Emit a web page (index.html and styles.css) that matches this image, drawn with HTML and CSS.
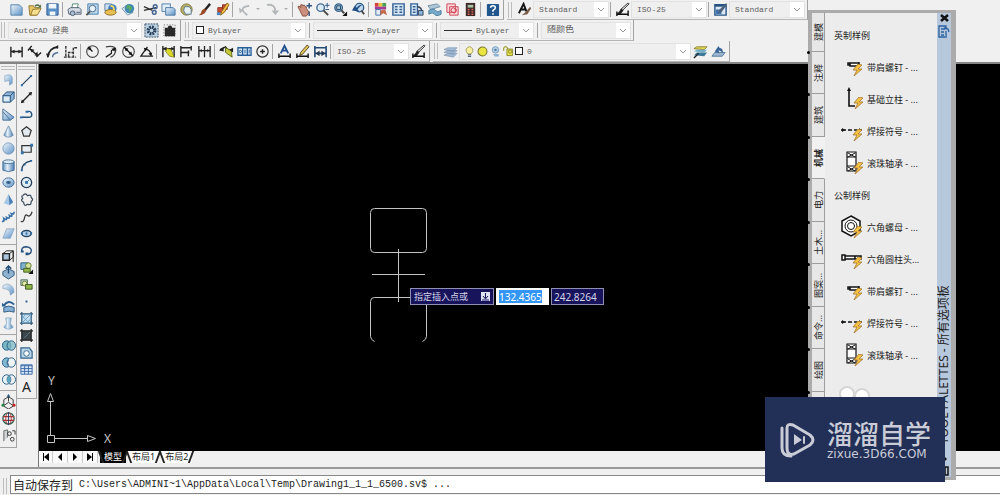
FILE: index.html
```html
<!DOCTYPE html>
<html lang="zh-CN">
<head>
<meta charset="utf-8">
<title>AutoCAD 经典</title>
<link rel="stylesheet" href="styles.css">
</head>
<body>
<svg class="defs" aria-hidden="true">
<defs>
<linearGradient id="g" x1="0" y1="0" x2="1" y2="1"><stop offset="0" stop-color="#eef6fc"/><stop offset="1" stop-color="#5f93c6"/></linearGradient>
<linearGradient id="gh"><stop offset="0" stop-color="#5d8fc0"/><stop offset=".4" stop-color="#e4f0fa"/><stop offset="1" stop-color="#4a7cb0"/></linearGradient>
<symbol id="new" viewBox="0 0 16 16"><path d="M2 3h9l3 3v8H2z" fill="url(#g)" stroke="#5480a8"/></symbol>
<symbol id="open" viewBox="0 0 16 16"><path d="M2 4h5l1 2h4l-2 8H3z" fill="#e9c867" stroke="#94752d"/><path d="M6 8l9-1-4 7H4z" fill="#f7df91" stroke="#94752d"/><path d="M8 4q3-3 6 0l1-2v4h-4l2-1q-2-2-4 0" fill="#4c6a3c"/></symbol>
<symbol id="save" viewBox="0 0 16 16"><path d="M2 2h12v12H2z" fill="#5a8fc8" stroke="#345f92"/><path d="M4 2h8v5H4zM5 10h6v4H5z" fill="#eef5fb"/></symbol>
<symbol id="print" viewBox="0 0 16 16"><path d="M5 7l1-5h6l-1 5" fill="#fff" stroke="#587"/><path d="M1 8l3-2h9l2 2v5H2z" fill="#d4dbe4" stroke="#526276"/><circle cx="6" cy="12" r="2.500" fill="#aebcd0" stroke="#4b5b70"/><path d="M10 11h4" stroke="#4b5b70"/></symbol>
<symbol id="preview" viewBox="0 0 16 16"><path d="M3 2h11v11H3z" fill="#b7d6ee" stroke="#4f82ae"/><circle cx="8" cy="7" r="3.500" fill="#e5f2fb" stroke="#4f6a85"/><path d="M5.500 10L1.500 14" stroke="#555" stroke-width="2"/></symbol>
<symbol id="publish" viewBox="0 0 16 16"><path d="M2 2h7v7H2z" fill="#cfe2f4" stroke="#5a7fa8"/><circle cx="10" cy="7" r="4.500" fill="#3d7dc0"/><ellipse cx="8" cy="11" rx="6" ry="3" fill="#e8c050" stroke="#8c6a20"/><path d="M8 4l3 1 1 4" stroke="#e8d36c" fill="none" stroke-width="2"/></symbol>
<symbol id="globe" viewBox="0 0 16 16"><path d="M1 7l6-4 6 8-6 3z" fill="#d9e6ee" stroke="#7b95aa"/><circle cx="9" cy="7" r="5" fill="#3f88b4"/><path d="M7 3q4 0 5 4l-3 4-1-4-3 0z" fill="#59a867"/></symbol>
<symbol id="cut" viewBox="0 0 16 16"><path d="M1 5l9 4M1 9l13-3" stroke="#333" stroke-width="1.500"/><circle cx="12" cy="11" r="2" fill="none" stroke="#3f5e90" stroke-width="1.500"/><circle cx="13" cy="5" r="2" fill="none" stroke="#3f5e90" stroke-width="1.500"/></symbol>
<symbol id="copy" viewBox="0 0 16 16"><path d="M1 2h9v8H1z" fill="#e1eef8" stroke="#5480a8"/><path d="M5 6h8l2 2v6H5z" fill="url(#g)" stroke="#4876a2"/></symbol>
<symbol id="paste" viewBox="0 0 16 16"><circle cx="8" cy="8" r="6" fill="#b9ae65" stroke="#7c7436"/><path d="M6 5h5l2 3v5H7L5 9z" fill="#e6f0f6" stroke="#5b7c90"/></symbol>
<symbol id="brush" viewBox="0 0 16 16"><path d="M14 2L8 9" stroke="#222" stroke-width="2.500"/><path d="M8 7l2 2q-2 5-8 5 3-2 3-5z" fill="#9b4d28"/></symbol>
<symbol id="bedit" viewBox="0 0 16 16"><path d="M3 6h5v5H3zM8 3h5v5H8z" fill="#cf4e35" stroke="#8b2e1e"/><path d="M2 11h4v3H2z" fill="#4b88c4"/><path d="M13 1L7 10l-1 4 4-3 5-8z" fill="#efb943" stroke="#8d6420"/></symbol>
<symbol id="undo" viewBox="0 0 16 16"><path d="M11 14Q0 6 13 4" fill="none" stroke="#b5b8bb" stroke-width="2"/><path d="M2 6l1 6 4-3z" fill="#b5b8bb"/></symbol>
<symbol id="redo" viewBox="0 0 16 16"><path d="M2 3q9-1 9 7" fill="none" stroke="#b5b8bb" stroke-width="2"/><path d="M7 9h8l-4 5z" fill="#b5b8bb"/></symbol>
<symbol id="pan" viewBox="0 0 16 16"><path d="M1 5q1-2 3 1V3q2-1 2 1 2-2 3 1 2 0 1 2l3 4-3 4H6z" fill="#cc8f7d" stroke="#84503f"/><path d="M13 1v6M10 4h6M13 10v5" stroke="#2f537d" stroke-width="1.500"/></symbol>
<symbol id="zoom" viewBox="0 0 16 16"><circle cx="6" cy="6" r="4" fill="#dcecf7" stroke="#496f96" stroke-width="1.500"/><path d="M9 9l5 5" stroke="#444" stroke-width="2"/><path d="M13 1v5M10.500 3.500h5M11 8h4" stroke="#275788"/></symbol>
<symbol id="zoomw" viewBox="0 0 16 16"><circle cx="6" cy="6" r="4" fill="#a7cbe7" stroke="#3a638e" stroke-width="1.500"/><path d="M4 4h4v4H4z" fill="none" stroke="#245"/><path d="M9 9l3 3" stroke="#444" stroke-width="2"/><path d="M15 10v5h-5z" fill="#111"/></symbol>
<symbol id="zoomp" viewBox="0 0 16 16"><circle cx="9" cy="6" r="4.500" fill="#c3dcf0" stroke="#365f8b" stroke-width="1.500"/><path d="M11 9l3 4" stroke="#444" stroke-width="2"/><path d="M1 9l3-5 2 2q3-4 6-3-4 3-5 5l2 2z" fill="#234e83"/></symbol>
<symbol id="prop" viewBox="0 0 16 16"><path d="M2 1h4v4H2z" fill="#d2413c"/><path d="M6 1h4v4H6z" fill="#e6c53b"/><path d="M10 1h4v4h-4z" fill="#4c9f54"/><path d="M2 5h12v3H2z" fill="#a33c9b"/><path d="M3 8h5v6H3z" fill="#e4edf6" stroke="#4672a6"/><path d="M8 9l5-1 2 6-4-2-3 2z" fill="#c76b4c"/></symbol>
<symbol id="dc" viewBox="0 0 16 16"><path d="M2 2h12v12H2z" fill="#dcebf7" stroke="#315f92" stroke-width="1.500"/><path d="M4 5h3M9 5h3M4 8h3M9 8h3M4 11h3M9 11h3" stroke="#315f92" stroke-width="1.500"/></symbol>
<symbol id="tp" viewBox="0 0 16 16"><path d="M2 2h7v12H2z" fill="#dcebf7" stroke="#315f92" stroke-width="1.500"/><path d="M4 5h3M4 8h3M4 11h3" stroke="#315f92" stroke-width="1.500"/><path d="M9 5q5 0 5 8" fill="none" stroke="#345" stroke-width="1.500"/><path d="M10 9h5v5h-5z" fill="#87b3dc" stroke="#345"/></symbol>
<symbol id="sheet" viewBox="0 0 16 16"><path d="M1 4l10-2 3 3-10 3z" fill="#b0c7d8" stroke="#7190a8"/><path d="M2 9q5-3 7 0t6 0v4q-5 3-7 0t-6 0z" fill="#76abc9" stroke="#467c9d"/></symbol>
<symbol id="markup" viewBox="0 0 16 16"><path d="M2 2h9v9H2zM5 5h9v9H5z" fill="#f9d7da" stroke="#cf4458"/><path d="M7 7q2-2 3 0 3 0 2 3-2 3-4 1-3-1-1-4" fill="none" stroke="#cf3147"/></symbol>
<symbol id="calc" viewBox="0 0 16 16"><path d="M3 1h10v14H3z" fill="#3c2928"/><path d="M5 3h6v3H5z" fill="#a9c3a7"/><path d="M5 8h2M9 8h2M5 10.500h2M9 10.500h2M5 13h2M9 13h2" stroke="#d76757" stroke-width="1.500"/></symbol>
<symbol id="help" viewBox="0 0 16 16"><rect x="2" y="2" width="13" height="13" rx="1" fill="#22568f"/><path d="M6 6q0-2 2.500-2T11 6q0 1.500-2.500 3v1.500M8.500 12v1.500" fill="none" stroke="#fff" stroke-width="1.700"/></symbol>
<symbol id="gear" viewBox="0 0 16 16"><path d="M1 1h14v14H1z" fill="#bdd2e3" stroke="#334c63" stroke-dasharray="2 1"/><circle cx="8" cy="8" r="4" fill="none" stroke="#263f59" stroke-width="2.500" stroke-dasharray="2 1.140"/><circle cx="8" cy="8" r="2.500" fill="none" stroke="#263f59"/></symbol>
<symbol id="ws" viewBox="0 0 16 16"><path d="M2 2h12v12H2z" fill="none" stroke="#555" stroke-dasharray="1 2"/><path d="M3 5h3l1-2h3l1 2h3v9H3z" fill="#292929"/></symbol>
<symbol id="linear" viewBox="0 0 16 16"><path d="M2 3v11M14 3v11M2 8h12" stroke="#222" stroke-width="1.500"/><path d="M2 8l4-2v4zM14 8l-4-2v4z" fill="#222"/></symbol>
<symbol id="aligned" viewBox="0 0 16 16"><path d="M3 5l9 8M5 2L1 7M15 9l-5 5" stroke="#222" stroke-width="1.500"/><path d="M3 5l5 1-3 3zM12 13l-1-5-3 4z" fill="#222"/></symbol>
<symbol id="arclen" viewBox="0 0 16 16"><path d="M3 14Q4 4 14 3" fill="none" stroke="#222" stroke-width="1.800"/><path d="M8 14q0-4 6-5" fill="none" stroke="#4d6e90" stroke-width="1.500"/><path d="M14 1v4l-4-1zM1 10l4 1-2 4z" fill="#222"/></symbol>
<symbol id="ordinate" viewBox="0 0 16 16"><path d="M3 2v12M1 14h13M6 14V9h5V4h4M11 8v6" fill="none" stroke="#333" stroke-dasharray="3 1" stroke-width="1.500"/></symbol>
<symbol id="radius" viewBox="0 0 16 16"><circle cx="8" cy="8" r="6.200" fill="none" stroke="#444" stroke-width="1.200"/><path d="M8 8L4 4" stroke="#111" stroke-width="1.400"/><path d="M3 3l4 1-3 3z" fill="#111"/></symbol>
<symbol id="jog" viewBox="0 0 16 16"><path d="M3 3q13-2 10 6-1 4-5 5" fill="none" stroke="#444" stroke-width="1.400"/><path d="M13 5L9 7v3l-6 4" fill="none" stroke="#222" stroke-width="1.300"/><path d="M14 4l-5 1 3 3z" fill="#111"/></symbol>
<symbol id="diam" viewBox="0 0 16 16"><circle cx="8" cy="8" r="6.200" fill="none" stroke="#444" stroke-width="1.200"/><path d="M3 3l10 10" stroke="#111" stroke-width="1.400"/><path d="M4 4l4 1-3 3zM12 12l-4-1 3-3z" fill="#111"/></symbol>
<symbol id="angle" viewBox="0 0 16 16"><path d="M9 3L2 13h13M6 5q6 1 7 7" fill="none" stroke="#222" stroke-width="1.400"/><path d="M5 4l4 1-2 3zM13 13l-3-3 4-1z" fill="#111"/></symbol>
<symbol id="quick" viewBox="0 0 16 16"><path d="M2 2v12M14 2v12M2 5h12" stroke="#222" stroke-width="1.500"/><path d="M4 4l7 2 3 8-5-1-4-5z" fill="#dbd928" stroke="#77741f" stroke-width=".7"/><path d="M2 5l4-2v4zM14 5l-3-2v4z" fill="#222"/></symbol>
<symbol id="base" viewBox="0 0 16 16"><path d="M2 2v12M13 2v5M10 7v6M2 4h11M2 9h9" fill="none" stroke="#222" stroke-width="1.500"/></symbol>
<symbol id="cont" viewBox="0 0 16 16"><path d="M2 2v12M8 2v12M14 2v12M2 7h12" stroke="#222" stroke-width="1.400"/><path d="M3 7l2-2v4zM13 7l-2-2v4z" fill="#222"/></symbol>
<symbol id="space" viewBox="0 0 16 16"><path d="M1 6l6-3 2 3 5 1" fill="none" stroke="#222" stroke-width="1.500"/><path d="M7 4l6 3 1 7-7-5z" fill="#c8cb35" stroke="#5c6a23"/><path d="M0 7l5-4v5zM15 4v5l-4-3z" fill="#222"/></symbol>
<symbol id="tol" viewBox="0 0 16 16"><path d="M1 4h14v8H1zM6 4v8M11 4v8" fill="#d8e9f8" stroke="#285f9a" stroke-width="1.400"/><circle cx="3.500" cy="8" r="1.200" fill="none" stroke="#285f9a"/><path d="M8.500 6v4M13 6v4" stroke="#285f9a"/></symbol>
<symbol id="center" viewBox="0 0 16 16"><circle cx="8" cy="8" r="6" fill="none" stroke="#333" stroke-width="1.300"/><path d="M8 5.500v5M5.500 8h5" stroke="#222" stroke-width="1.500"/></symbol>
<symbol id="dima" viewBox="0 0 16 16"><path d="M4 10l4-8 4 8M5.500 7h5" fill="none" stroke="#214f8f" stroke-width="2"/><path d="M2 10v5M14 10v5M2 13h12" stroke="#111" stroke-width="1.500"/></symbol>
<symbol id="dime" viewBox="0 0 16 16"><path d="M13 1l2 2-7 8-3 1 1-3z" fill="#e4c55a" stroke="#514321"/><path d="M2 10v5M14 10v5M2 13h12" stroke="#111" stroke-width="1.500"/></symbol>
<symbol id="dimu" viewBox="0 0 16 16"><path d="M2 2v12M14 2v12M2 4h12M2 10h12" stroke="#244c77" stroke-width="1.700"/><path d="M3 10l4-3v6zM13 10l-4-3v6z" fill="#24364b"/></symbol>
<symbol id="dims" viewBox="0 0 16 16"><path d="M14 1l1 1-7 7-2-1z" fill="#ddd" stroke="#333"/><path d="M7 7l2 2-3 4H2z" fill="#222"/><path d="M2 10v5M14 9v6M2 13h12" stroke="#111" stroke-width="1.500"/></symbol>
<symbol id="txts" viewBox="0 0 16 16"><path d="M2 12L7 2l3 8M4 8h5" fill="none" stroke="#111" stroke-width="2"/><path d="M14 5l-5 6-4 3 6-1 4-6z" fill="#765944"/></symbol>
<symbol id="tabs" viewBox="0 0 16 16"><path d="M2 3h12v11H2z" fill="#dceaf6" stroke="#265384" stroke-width="1.500"/><path d="M2 4h12" stroke="#265384" stroke-width="2"/><path d="M3 8h6v5H3z" fill="#3f74ad"/><path d="M14 1L7 8l-2 4 4-1 6-8z" fill="#4f647d"/></symbol>
<symbol id="layers" viewBox="0 0 16 16"><path d="M1 12l4-2h10l-4 4zM1 9l4-2h10l-4 4zM1 6l4-2h10l-4 4z" fill="#a3bad4" stroke="#7f97b3" stroke-width=".7"/></symbol>
<symbol id="bulb" viewBox="0 0 16 16"><path d="M6 11Q3 8 4 5q4-6 8 0 1 3-2 6z" fill="#f9f0a0" stroke="#95904c"/><path d="M6 12h4M6 14h4" stroke="#546a7e" stroke-width="1.500"/></symbol>
<symbol id="sun" viewBox="0 0 16 16"><circle cx="8" cy="8" r="5.500" fill="#e9e43f" stroke="#77782e" stroke-width="1.300"/></symbol>
<symbol id="freeze" viewBox="0 0 16 16"><circle cx="8" cy="6" r="4" fill="#b4cee5" stroke="#7397b8"/><circle cx="8" cy="6" r="1.500" fill="#587fa7"/><path d="M5 11h7v3H7z" fill="#8bb3d1"/></symbol>
<symbol id="lock" viewBox="0 0 16 16"><path d="M2 7V4q2-4 5 0v4" fill="none" stroke="#a5a336" stroke-width="1.500"/><path d="M6 5h7v8H6z" fill="#e5e04b" stroke="#818026"/><circle cx="10" cy="8" r="2" fill="none" stroke="#818026"/></symbol>
<symbol id="lmatch" viewBox="0 0 16 16"><path d="M1 5l3-2h11l-3 3z" fill="#e8dc54" stroke="#888239"/><path d="M1 8l3-2h11l-3 3z" fill="#74b0ca"/><path d="M1 12l3-3h11l-3 4z" fill="#3f7a9a"/><path d="M1 15l5-5" stroke="#222" stroke-width="1.500"/></symbol>
<symbol id="lprev" viewBox="0 0 16 16"><path d="M1 13l3-4h11l-3 4z" fill="#9eb8d2" stroke="#53779a"/><path d="M4 8l4-6 1 2q5 1 3 6-1-3-4-3l1 3z" fill="#386598"/></symbol>
<symbol id="poly" viewBox="0 0 16 16"><path d="M4 3q7-3 8 2v6l-3 2V8L4 9z" fill="url(#g)" stroke="#7798ba" stroke-width=".6"/></symbol>
<symbol id="box" viewBox="0 0 16 16"><path d="M2 6l4-4h8v7l-4 4H2z" fill="#8db3d6" stroke="#2f567c"/><path d="M2 6h8v7M10 6l4-4" fill="none" stroke="#2f567c"/><path d="M3 7h6v5H3z" fill="#dceaf6"/></symbol>
<symbol id="wedge" viewBox="0 0 16 16"><path d="M2 2l12 9-4 3H2z" fill="url(#g)" stroke="#426c94"/><path d="M2 5l8 9" stroke="#426c94"/></symbol>
<symbol id="cone" viewBox="0 0 16 16"><path d="M8 2l5 10q-5 4-10 0z" fill="url(#gh)" stroke="#6283a5" stroke-width=".8"/></symbol>
<symbol id="sphere" viewBox="0 0 16 16"><circle cx="8" cy="8" r="6" fill="url(#g)" stroke="#6085ac" stroke-width=".7"/></symbol>
<symbol id="cyl" viewBox="0 0 16 16"><path d="M2 4v9q6 3 12 0V4" fill="url(#gh)" stroke="#456f99"/><ellipse cx="8" cy="4" rx="6" ry="2" fill="#dceaf6" stroke="#456f99"/></symbol>
<symbol id="torus" viewBox="0 0 16 16"><ellipse cx="8" cy="8" rx="6" ry="5" fill="url(#g)" stroke="#456f99"/><ellipse cx="8" cy="8" rx="2.500" ry="1.500" fill="#34608c"/></symbol>
<symbol id="pyr" viewBox="0 0 16 16"><path d="M8 2L3 12l6 2z" fill="#a5c8e6"/><path d="M8 2l1 12 4-3z" fill="#4b80b5"/></symbol>
<symbol id="helix" viewBox="0 0 16 16"><path d="M1 13q3 1 2-3 4 3 3-1 4 2 3-2 4 2 2-2 3 1 3-2" fill="none" stroke="#3970a5" stroke-width="1.800"/></symbol>
<symbol id="planar" viewBox="0 0 16 16"><path d="M6 3h8l-4 10H2z" fill="url(#g)" stroke="#7799ba" stroke-width=".7"/></symbol>
<symbol id="extr" viewBox="0 0 16 16"><path d="M2 6h7v7H2z" fill="#aac5de" stroke="#222" stroke-width="1.500"/><path d="M9 6l4-3v7l-4 3M2 6l4-3h7M13 3v12" fill="none" stroke="#222"/></symbol>
<symbol id="press" viewBox="0 0 16 16"><path d="M2 7l6-3 6 3v4l-6 4-6-4z" fill="#90b3d1" stroke="#345575"/><path d="M8 1v8M5 4l3-3 3 3" fill="none" stroke="#234d77" stroke-width="1.500"/></symbol>
<symbol id="sweep" viewBox="0 0 16 16"><path d="M2 4l4-2q8 1 8 9l-4 3Q10 7 2 7z" fill="url(#g)" stroke="#8ba6bf" stroke-width=".7"/></symbol>
<symbol id="rev" viewBox="0 0 16 16"><path d="M3 9q5-3 11 0v5q-5-2-11 0z" fill="#86b0d6" stroke="#2e5780"/><path d="M3 7q5-7 11-1" fill="none" stroke="#2e6294" stroke-width="2"/><path d="M1 4l5 4H1z" fill="#2e6294"/></symbol>
<symbol id="loft" viewBox="0 0 16 16"><path d="M5 2h6l-1 6 3 4q-5 4-10 0l3-4z" fill="url(#gh)" stroke="#7fa0c0" stroke-width=".7"/></symbol>
<symbol id="union" viewBox="0 0 16 16"><ellipse cx="6" cy="8" rx="4.500" ry="5" fill="#78b6c2" stroke="#285e85"/><ellipse cx="11" cy="8" rx="4.500" ry="5" fill="#78b6c2" fill-opacity=".7" stroke="#285e85"/></symbol>
<symbol id="subt" viewBox="0 0 16 16"><ellipse cx="6" cy="8" rx="4.500" ry="5" fill="#81b9d2" stroke="#285e85"/><ellipse cx="11" cy="8" rx="4.500" ry="5" fill="#eef3f6" stroke="#285e85"/><path d="M8 5q-2 3 0 6" fill="none" stroke="#285e85"/></symbol>
<symbol id="inter" viewBox="0 0 16 16"><ellipse cx="6" cy="8" rx="4.500" ry="5" fill="#e8f1f6" stroke="#285e85"/><ellipse cx="11" cy="8" rx="4.500" ry="5" fill="none" stroke="#285e85"/><path d="M8.500 4q4 4 0 8-4-4 0-8" fill="#59a5bd"/></symbol>
<symbol id="ucs" viewBox="0 0 16 16"><path d="M8 8V2M8 9l-6 4M8 9l6 4M3 6l5-3 5 3v7l-5 3-5-3z" fill="none" stroke="#333"/><path d="M6 3l2-3 2 3z" fill="#258"/><circle cx="2" cy="12" r="1.500" fill="#284"/><circle cx="14" cy="12" r="1.500" fill="#c22"/></symbol>
<symbol id="orbit" viewBox="0 0 16 16"><circle cx="8" cy="8" r="6" fill="none" stroke="#2e5d51" stroke-width="1.400"/><ellipse cx="8" cy="8" rx="3" ry="6" fill="none" stroke="#a33"/><path d="M2 6h12M2 10h12" stroke="#a33" stroke-width="1.300"/><path d="M8 1v14" stroke="#246"/></symbol>
<symbol id="tri" viewBox="0 0 16 16"><path d="M3 14V3l4-1v8" fill="#cfd3d6" stroke="#666"/><circle cx="9" cy="6" r="2" fill="none" stroke="#333"/><circle cx="12" cy="12" r="2" fill="none" stroke="#333"/><path d="M12 3h3v4" fill="none" stroke="#333"/></symbol>
<symbol id="line" viewBox="0 0 16 16"><path d="M3 13L13 3" stroke="#25435f" stroke-width="1.200"/><path d="M2 12h2v2H2zM12 2h2v2h-2z" fill="#2768a5"/></symbol>
<symbol id="xline" viewBox="0 0 16 16"><path d="M3 13L13 3" stroke="#222" stroke-width="1.400"/><path d="M2 14l1-4 3 3zM14 2l-1 4-3-3z" fill="#222"/></symbol>
<symbol id="pline" viewBox="0 0 16 16"><path d="M3 11h8q4-1 2-5-1-2-4-1" fill="none" stroke="#25527e" stroke-width="1.500"/><path d="M1 10h3v2H1zM7 4h3v2H7z" fill="#2768a5"/></symbol>
<symbol id="pgon" viewBox="0 0 16 16"><path d="M8 3l5 4-2 6H5L3 7z" fill="#e2eaf0" stroke="#333" stroke-width="1.300"/></symbol>
<symbol id="rect" viewBox="0 0 16 16"><path d="M3 5h10v7H3z" fill="#e8eef3" stroke="#333" stroke-width="1.300"/><path d="M2 11h3v3H2zM12 3h3v3h-3z" fill="#3471a8"/></symbol>
<symbol id="arc" viewBox="0 0 16 16"><path d="M3 13q0-8 10-10" fill="none" stroke="#25435f" stroke-width="1.300"/><path d="M2 12h2v2H2zM12 2h2v2h-2zM5 6h2v2H5z" fill="#2768a5"/></symbol>
<symbol id="circ" viewBox="0 0 16 16"><circle cx="8" cy="8" r="5.500" fill="#e1edf5" stroke="#263f58" stroke-width="1.400"/><path d="M8 8l3-3M7 7h2v2H7z" fill="#3570aa" stroke="#3570aa"/></symbol>
<symbol id="cloud" viewBox="0 0 16 16"><path d="M4 4q3-4 5 0 4-2 4 2 3 2 0 4 0 5-4 3-4 3-4-2-4-2-1-4-2-3 0-3z" fill="none" stroke="#3b4b5a" stroke-width="1.300"/></symbol>
<symbol id="spl" viewBox="0 0 16 16"><path d="M2 13q3 2 4-4 1-4 3-2 3 2 5-4" fill="none" stroke="#333" stroke-width="1.300"/></symbol>
<symbol id="ell" viewBox="0 0 16 16"><ellipse cx="8" cy="8" rx="5" ry="3.200" fill="#b8d6eb" stroke="#24435f" stroke-width="1.500"/><path d="M2 7h2v2H2zM12 7h2v2h-2zM7 7h2v2H7z" fill="#25659f"/></symbol>
<symbol id="earc" viewBox="0 0 16 16"><path d="M3 9q-1-5 5-5 6 1 5 5-1 3-4 3" fill="none" stroke="#24507b" stroke-width="1.500"/><path d="M7 10h3v3H7zM2 8h3v2H2z" fill="#24507b"/></symbol>
<symbol id="ins" viewBox="0 0 16 16"><path d="M2 3h8v7H2z" fill="#86b1ce" stroke="#286187"/><circle cx="10" cy="6" r="3" fill="#d2e195" stroke="#627637"/><path d="M5 9h7v4H5z" fill="#91b449" stroke="#4a6425"/><path d="M15 10v5h-5z" fill="#111"/></symbol>
<symbol id="blk" viewBox="0 0 16 16"><path d="M2 3h7v6H2z" fill="#bacfc9" stroke="#526c57"/><circle cx="6" cy="7" r="2.500" fill="#e4eda8" stroke="#6b813c"/><path d="M7 8h7v5H7z" fill="#91b449" stroke="#3c5521"/></symbol>
<symbol id="pt" viewBox="0 0 16 16"><path d="M7 7h2v2H7z" fill="#245589"/></symbol>
<symbol id="hat" viewBox="0 0 16 16"><path d="M3 3h11v10H3z" fill="#c5dff2"/><path d="M3 1v14M13 1v14M1 3h14M1 13h14" stroke="#315775" stroke-width="1.300"/><path d="M3 8l5-5M3 13L13 3M8 13l5-5M3 5l8 8" stroke="#6ca1c9"/></symbol>
<symbol id="grad" viewBox="0 0 16 16"><path d="M3 3h10v10H3z" fill="#39444b"/><path d="M3 1v14M13 1v14M1 3h14M1 13h14" stroke="#222" stroke-width="1.300"/><path d="M5 11l7-7" stroke="#65747b"/></symbol>
<symbol id="reg" viewBox="0 0 16 16"><path d="M2 3h9l3 4v7H2z" fill="#b9d5e8" stroke="#36678e" stroke-width="1.300"/><circle cx="8" cy="9" r="3" fill="#f7fafb" stroke="#36678e"/></symbol>
<symbol id="tbl" viewBox="0 0 16 16"><path d="M2 3h12v10H2z" fill="#dceaf8" stroke="#3969a5"/><path d="M2 4h12M2 7h12M2 10h12M6 4v9M10 4v9" stroke="#3969a5"/></symbol>
<symbol id="bolt" viewBox="0 0 12 12"><path d="M6 0L1 6l4 0-3 6 8-7H6l4-4z" fill="#f6c442" stroke="#a5752d" stroke-width=".8"/></symbol>
<symbol id="i-screw" viewBox="0 0 24 24"><path d="M9 8h9v3H9zM7 8h2v2H7zM18 7v5" fill="#fff" stroke="#111" stroke-width="1.500"/><use href="#bolt" x="11" y="9" width="12" height="12"/></symbol>
<symbol id="i-post" viewBox="0 0 24 24"><path d="M8 3v16h6" fill="none" stroke="#111" stroke-width="1.600"/><path d="M6 4l2-4 2 4z" fill="#111"/><use href="#bolt" x="12" y="10" width="12" height="12"/></symbol>
<symbol id="i-weld" viewBox="0 0 24 24"><path d="M0 11h5M7 11h4M13 11h3M17 11h4" stroke="#111" stroke-width="1.400"/><path d="M1 9l3 2-3 2zM19 9v4l-2-2z" fill="#111"/><use href="#bolt" x="11" y="10" width="12" height="12"/></symbol>
<symbol id="i-bear" viewBox="0 0 24 24"><path d="M6 1h9v19H6zM6 6h9M6 15h9" fill="#fff" stroke="#111" stroke-width="1.200"/><path d="M7 2l7 4M14 2L7 6M7 16l7 4M14 16l-7 4" stroke="#111"/><use href="#bolt" x="12" y="11" width="12" height="12"/></symbol>
<symbol id="i-nut" viewBox="0 0 24 24"><path d="M10 1l9 5v10l-9 5-9-5V6z" fill="#fff" stroke="#111" stroke-width="1.500"/><circle cx="10" cy="11" r="6" fill="none" stroke="#111"/><circle cx="10" cy="11" r="3.500" fill="none" stroke="#111"/><use href="#bolt" x="11" y="11" width="12" height="12"/></symbol>
<symbol id="i-bolt" viewBox="0 0 24 24"><path d="M1 8h3v5H1zM4 9h16v3H4zM14 9v3" fill="#fff" stroke="#111" stroke-width="1.500"/><use href="#bolt" x="11" y="10" width="12" height="12"/></symbol>
</defs>
</svg>

<main class="app">
<header class="bars">
  <div class="row">
    <div class="bar bar-first">
      <button aria-label="新建"><svg><use href="#new"/></svg></button><button aria-label="打开"><svg><use href="#open"/></svg></button><button aria-label="保存"><svg><use href="#save"/></svg></button><i class="sep"></i>
      <button aria-label="打印"><svg><use href="#print"/></svg></button><button aria-label="打印预览"><svg><use href="#preview"/></svg></button><button aria-label="发布"><svg><use href="#publish"/></svg></button><button aria-label="三维 DWF"><svg><use href="#globe"/></svg></button><i class="sep"></i>
      <button aria-label="剪切"><svg><use href="#cut"/></svg></button><button aria-label="复制"><svg><use href="#copy"/></svg></button><button aria-label="粘贴"><svg><use href="#paste"/></svg></button><button aria-label="特性匹配"><svg><use href="#brush"/></svg></button><button aria-label="块编辑器"><svg><use href="#bedit"/></svg></button><i class="sep"></i>
      <button aria-label="放弃"><svg><use href="#undo"/></svg></button><button class="caret" aria-label="放弃列表"></button><button aria-label="重做"><svg><use href="#redo"/></svg></button><button class="caret" aria-label="重做列表"></button><i class="sep"></i>
      <button aria-label="平移"><svg><use href="#pan"/></svg></button><button aria-label="实时缩放"><svg><use href="#zoom"/></svg></button><button aria-label="窗口缩放"><svg><use href="#zoomw"/></svg></button><button aria-label="缩放上一个"><svg><use href="#zoomp"/></svg></button><i class="sep"></i>
      <button aria-label="特性"><svg><use href="#prop"/></svg></button><button aria-label="设计中心"><svg><use href="#dc"/></svg></button><button aria-label="工具选项板"><svg><use href="#tp"/></svg></button><button aria-label="图纸集"><svg><use href="#sheet"/></svg></button><button aria-label="标记集"><svg><use href="#markup"/></svg></button><button aria-label="计算器"><svg><use href="#calc"/></svg></button><i class="sep"></i>
      <button aria-label="帮助"><svg><use href="#help"/></svg></button>
    </div>
    <div class="bar"><i class="grip"></i>
      <button aria-label="文字样式管理"><svg><use href="#txts"/></svg></button><span class="combo w76"><select aria-label="文字样式"><option>Standard</option></select></span><i class="sep"></i>
      <button aria-label="标注样式管理"><svg><use href="#dims"/></svg></button><span class="combo w76"><select aria-label="标注样式"><option>ISO-25</option></select></span><i class="sep"></i>
      <button aria-label="表格样式管理"><svg><use href="#tabs"/></svg></button><span class="combo w76"><select aria-label="表格样式"><option>Standard</option></select></span>
    </div>
  </div>
  <div class="row">
    <div class="bar"><i class="grip"></i>
      <span class="combo w134"><select aria-label="工作空间"><option>AutoCAD 经典</option></select></span>
      <button aria-label="工作空间设置"><svg><use href="#gear"/></svg></button><button aria-label="我的工作空间"><svg><use href="#ws"/></svg></button>
    </div>
    <div class="bar"><i class="grip"></i>
      <span class="combo w114 tight"><b class="swatch"></b><select aria-label="颜色"><option>ByLayer</option></select></span><i class="sep wide"></i>
      <span class="combo w120 tight"><b class="rule r46"></b><select aria-label="线型"><option>ByLayer</option></select></span><i class="sep wide"></i>
      <span class="combo w94 tight"><b class="rule r28"></b><select aria-label="线宽"><option>ByLayer</option></select></span><i class="sep wide"></i>
      <span class="combo w90"><select class="big" aria-label="打印样式"><option>随颜色</option></select></span>
    </div>
  </div>
  <div class="row">
    <div class="bar bar-first">
      <button aria-label="线性"><svg><use href="#linear"/></svg></button><button aria-label="对齐"><svg><use href="#aligned"/></svg></button><button aria-label="弧长"><svg><use href="#arclen"/></svg></button><button aria-label="坐标"><svg><use href="#ordinate"/></svg></button><i class="sep"></i>
      <button aria-label="半径"><svg><use href="#radius"/></svg></button><button aria-label="折弯"><svg><use href="#jog"/></svg></button><button aria-label="直径"><svg><use href="#diam"/></svg></button><button aria-label="角度"><svg><use href="#angle"/></svg></button><i class="sep"></i>
      <button aria-label="快速标注"><svg><use href="#quick"/></svg></button><button aria-label="基线"><svg><use href="#base"/></svg></button><button aria-label="连续"><svg><use href="#cont"/></svg></button><i class="sep"></i>
      <button aria-label="标注间距"><svg><use href="#space"/></svg></button><button aria-label="公差"><svg><use href="#tol"/></svg></button><button aria-label="圆心标记"><svg><use href="#center"/></svg></button><i class="sep"></i>
      <button aria-label="编辑标注"><svg><use href="#dima"/></svg></button><button aria-label="编辑标注文字"><svg><use href="#dime"/></svg></button><button aria-label="标注更新"><svg><use href="#dimu"/></svg></button><i class="sep"></i>
      <span class="combo w76 tight"><select aria-label="当前标注样式"><option>ISO-25</option></select></span>
      <button aria-label="标注样式"><svg><use href="#dims"/></svg></button>
    </div>
    <div class="bar"><i class="grip"></i>
      <button aria-label="图层特性"><svg><use href="#layers"/></svg></button>
      <span class="combo w232 tight"><svg><use href="#bulb"/></svg><svg><use href="#sun"/></svg><svg><use href="#freeze"/></svg><svg><use href="#lock"/></svg><b class="swatch"></b><select aria-label="图层"><option>0</option></select></span>
      <button aria-label="图层置为当前"><svg><use href="#lmatch"/></svg></button><button aria-label="上一个图层"><svg><use href="#lprev"/></svg></button>
    </div>
  </div>
</header>

<div class="work">
  <aside class="dock">
    <div class="col"><i class="vgrip"></i>
      <button aria-label="多段体"><svg><use href="#poly"/></svg></button><button aria-label="长方体"><svg><use href="#box"/></svg></button><button aria-label="楔体"><svg><use href="#wedge"/></svg></button><button aria-label="圆锥体"><svg><use href="#cone"/></svg></button><button aria-label="球体"><svg><use href="#sphere"/></svg></button><button aria-label="圆柱体"><svg><use href="#cyl"/></svg></button><button aria-label="圆环体"><svg><use href="#torus"/></svg></button><button aria-label="棱锥体"><svg><use href="#pyr"/></svg></button><button aria-label="螺旋"><svg><use href="#helix"/></svg></button><button aria-label="平面曲面"><svg><use href="#planar"/></svg></button><i class="vsep"></i>
      <button aria-label="拉伸"><svg><use href="#extr"/></svg></button><button aria-label="按住并拖动"><svg><use href="#press"/></svg></button><button aria-label="扫掠"><svg><use href="#sweep"/></svg></button><button aria-label="旋转"><svg><use href="#rev"/></svg></button><button aria-label="放样"><svg><use href="#loft"/></svg></button><i class="vsep"></i>
      <button aria-label="并集"><svg><use href="#union"/></svg></button><button aria-label="差集"><svg><use href="#subt"/></svg></button><button aria-label="交集"><svg><use href="#inter"/></svg></button><i class="vsep"></i>
      <button aria-label="三维移动"><svg><use href="#ucs"/></svg></button><button aria-label="三维旋转"><svg><use href="#orbit"/></svg></button><button aria-label="三维对齐"><svg><use href="#tri"/></svg></button>
    </div>
    <div class="col col-draw"><i class="vgrip"></i>
      <button aria-label="直线"><svg><use href="#line"/></svg></button><button aria-label="构造线"><svg><use href="#xline"/></svg></button><button aria-label="多段线"><svg><use href="#pline"/></svg></button><button aria-label="正多边形"><svg><use href="#pgon"/></svg></button><button aria-label="矩形"><svg><use href="#rect"/></svg></button><button aria-label="圆弧"><svg><use href="#arc"/></svg></button><button aria-label="圆"><svg><use href="#circ"/></svg></button><button aria-label="修订云线"><svg><use href="#cloud"/></svg></button><button aria-label="样条曲线"><svg><use href="#spl"/></svg></button><button aria-label="椭圆"><svg><use href="#ell"/></svg></button><button aria-label="椭圆弧"><svg><use href="#earc"/></svg></button><button aria-label="插入块"><svg><use href="#ins"/></svg></button><button aria-label="创建块"><svg><use href="#blk"/></svg></button><button aria-label="点"><svg><use href="#pt"/></svg></button><button aria-label="图案填充"><svg><use href="#hat"/></svg></button><button aria-label="渐变色"><svg><use href="#grad"/></svg></button><button aria-label="面域"><svg><use href="#reg"/></svg></button><button aria-label="表格"><svg><use href="#tbl"/></svg></button><button class="mtext" aria-label="多行文字">A</button>
    </div>
  </aside>
  <section class="view">
    <div class="canvas">
      <svg class="drawing" width="240" height="160" viewBox="360 200 240 160" fill="none" stroke="#c4c4c4">
        <rect x="370.500" y="208.500" width="56" height="44" rx="4"/>
        <path d="M374.500 341.500q-4-2-4-5v-35q0-4 4-4h48q4 0 4 4v35q0 3-4 5"/>
        <path d="M398.500 249v53M372 274.500h53"/>
      </svg>
      <svg class="axes" width="80" height="80" viewBox="40 370 80 80" fill="none" stroke="#c4c4c4">
        <path d="M47.500 435.500h7v7h-7zM50.500 435.500v-34M47.500 401.500l3-8 3 8zM54.500 438.500h33M87.500 435.500l8 3-8 3z"/>
        <text x="48" y="385">Y</text><text x="104" y="443">X</text>
      </svg>
      <div class="dyn">
        <div class="prompt"><label for="px">指定插入点或</label><svg width="9" height="9" viewBox="0 0 9 9"><path d="M0 0h9v9H0z" fill="#dfe3f5"/><path d="M4.500 1v5M2 4l2.500 3L7 4M1 8h7" fill="none" stroke="#17145c"/></svg></div>
        <input id="px" class="on" value="132.4365"><input aria-label="Y 坐标" value="242.8264">
      </div>
    </div>
    <nav class="tabs">
      <button class="nav" aria-label="第一个"><svg width="8" height="8" viewBox="0 0 8 8"><path d="M1 0h1v8H1zM7 0v8L2 4z"/></svg></button><button class="nav" aria-label="上一个"><svg width="8" height="8" viewBox="0 0 8 8"><path d="M6 0v8L2 4z"/></svg></button><button class="nav" aria-label="下一个"><svg width="8" height="8" viewBox="0 0 8 8"><path d="M2 0v8l4-4z"/></svg></button><button class="nav" aria-label="最后一个"><svg width="8" height="8" viewBox="0 0 8 8"><path d="M6 0h1v8H6zM1 0v8l5-4z"/></svg></button>
      <button class="tab current">模型</button><button class="tab">布局1</button><button class="tab">布局2</button>
    </nav>
  </section>
</div>

<footer class="cmd"><i class="grip"></i><output><span class="zh">自动保存到</span><span>C:\Users\ADMINI~1\AppData\Local\Temp\Drawing1_1_1_6500.sv$ ...</span></output></footer>

<aside class="palette">
  <nav class="side">
    <button>建模</button><button>注释</button><button>建筑</button><button class="current">机械</button><button>电力</button><button>土木...</button><button>图案...</button><button>命令...</button><button>绘图</button><button></button>
  </nav>
  <div class="tools">
    <h2>英制样例</h2>
    <button><svg><use href="#i-screw"/></svg>带肩螺钉 - ...</button>
    <button><svg><use href="#i-post"/></svg>基础立柱 - ...</button>
    <button><svg><use href="#i-weld"/></svg>焊接符号 - ...</button>
    <button><svg><use href="#i-bear"/></svg>滚珠轴承 - ...</button>
    <h2>公制样例</h2>
    <button><svg><use href="#i-nut"/></svg>六角螺母 - ...</button>
    <button><svg><use href="#i-bolt"/></svg>六角圆柱头...</button>
    <button><svg><use href="#i-screw"/></svg>带肩螺钉 - ...</button>
    <button><svg><use href="#i-weld"/></svg>焊接符号 - ...</button>
    <button><svg><use href="#i-bear"/></svg>滚珠轴承 - ...</button>
    <svg class="rings" viewBox="0 0 32 24"><circle cx="8" cy="8" r="7"/><circle cx="23" cy="10" r="7"/></svg>
  </div>
  <div class="title">
    <button aria-label="关闭"><svg width="9" height="8" viewBox="0 0 9 8"><path d="M1 1l7 6M8 1L1 7" stroke="#111" stroke-width="2.500"/></svg></button>
    <svg width="12" height="14" viewBox="0 0 12 14"><path d="M7 12H1V1h7v3M3 4h4M3 7h3M3 10h3M6 3l4 1 1 3M8 6v7" fill="none" stroke="#285f9e" stroke-width="1.300"/></svg>
    <span>TOOL PALETTES - 所有选项板</span>
    <svg width="12" height="8" viewBox="0 0 12 8"><path d="M5 0l4 4-4 4z" fill="#111"/></svg>
    <svg width="12" height="10" viewBox="0 0 12 10"><path d="M1 1h9v8H1M4 3v4M7 1v8" fill="none" stroke="#111" stroke-width="1.500"/></svg>
  </div>
</aside>

<div class="brand">
  <svg width="36" height="36" viewBox="0 0 36 36" fill="none" stroke="#c9ccd6" stroke-width="3" stroke-linecap="round" stroke-linejoin="round"><path d="M2 6v20q0 8 9 8M7 26V6q0-5 6-3l17 10q6 5 0 10L14 32q-7 2-7-6"/><path d="M14 12v11l8-5z" fill="#c9ccd6" stroke="none"/><path d="M24 15v6" stroke-width="2"/></svg>
  <div><strong>溜溜自学</strong><span>zixue.3D66.COM</span></div>
</div>
</main>
</body>
</html>
```
FILE: styles.css
```css
* { box-sizing: border-box; }
body { margin: 0; background: #f0f0f0; color: #222; font: 9px "Noto Sans", "Noto Sans CJK SC", sans-serif; }
button { display: flex; align-items: center; justify-content: center; flex: none; padding: 0; border: 0; background: none; color: inherit; font: inherit; }
.defs { position: absolute; width: 0; height: 0; }
.app { position: relative; display: flex; flex-direction: column; min-height: 100vh; overflow: hidden; }

.bars { display: flex; flex-direction: column; border-bottom: 2px solid #858585; }
.row { display: flex; height: 21px; }
.row:first-child { height: 20px; }
.bar { display: flex; align-items: center; padding-right: 2px; border-right: 1px solid #a2a2a2; border-bottom: 1px solid #b5b5b5; background: #f1f1f1; }
.bar + .bar { margin-left: 3px; }
.bar-first { padding-left: 7px; }
.bar button { width: 18px; height: 18px; }
.bar button svg, .dock svg { width: 15px; height: 15px; }
.bar .caret { width: 10px; }
.caret::after { content: ""; border: 2px solid transparent; border-top-color: #aaa; }
.sep { width: 1px; height: 15px; margin: 0 2px 0 1px; background: #a5a5a5; }
.sep.wide { margin: 0 3px; }
.grip { width: 4px; height: 16px; margin: 0 3px 0 1px; border: 1px solid #bdbdbd; border-width: 0 1px; }
.combo { display: flex; align-items: center; height: 17px; padding-left: 5px; border: 1px solid #e2e2e2; background: #efefef; }
.combo.tight { padding-left: 3px; }
.combo svg { width: 13px; height: 13px; }
select { flex: 1; min-width: 0; height: 15px; padding: 0; border: 0; outline: 0; appearance: none; color: #5e5e5e; font: 8px "Liberation Mono", "Noto Sans CJK SC", monospace;
  background: url("data:image/svg+xml,%3Csvg xmlns='http://www.w3.org/2000/svg' width='14' height='15'%3E%3Cpath d='M0 0h14v15H0z' fill='white'/%3E%3Cpath d='M4 6l3 3 3-3' fill='none' stroke='%23999'/%3E%3C/svg%3E") right center no-repeat; }
select.big { font-size: 9px; }
.w76 { width: 76px; }
.w90 { width: 90px; }
.w94 { width: 94px; }
.w114 { width: 114px; }
.w120 { width: 120px; }
.w134 { width: 134px; }
.w232 { width: 232px; }
.swatch { width: 8px; height: 8px; margin-right: 4px; border: 1px solid #222; background: #fff; }
.rule { height: 1px; margin-right: 4px; background: #333; }
.r46 { width: 46px; }
.r28 { width: 28px; }

.work { display: flex; flex: 1; }
.dock { display: flex; align-items: flex-start; width: 39px; border-right: 1px solid #777; }
.col { display: flex; flex-direction: column; align-items: center; width: 17px; padding-bottom: 3px; border-right: 1px solid #a5a5a5; border-bottom: 1px solid #a5a5a5; }
.col-draw { width: 20px; }
.col button { width: 16px; height: 17px; }
.vgrip { align-self: stretch; height: 4px; margin: 2px 1px; border: 1px solid #bdbdbd; border-width: 1px 0; }
.vsep { align-self: stretch; height: 1px; margin: 2px 0; background: #a5a5a5; }
.mtext { font: 14px "Noto Sans", sans-serif; }

.view { display: flex; flex: 1; flex-direction: column; }
.canvas { position: relative; flex: 1; background: #000; }
.drawing { position: absolute; left: 321px; top: 136px; }
.axes { position: absolute; left: 1px; bottom: 1px; }
.axes text { fill: #c4c4c4; stroke: none; font: 12px "Noto Sans", sans-serif; }
.dyn { position: absolute; left: 371px; top: 224px; display: flex; gap: 2px; }
.prompt, .dyn input { display: flex; align-items: center; height: 17px; border: 1px solid #8f8fb4; background: #17145c; color: #d5d5e8; }
.prompt { width: 84px; justify-content: space-between; padding: 0 3px; }
.dyn input { width: 53px; padding: 0 2px; outline: 0; font: 10px "Noto Sans", sans-serif; }
.dyn .on { border-color: #fff; color: #fff; background: linear-gradient(#3396f6, #3396f6) 2px 1px / 43px 13px no-repeat #fff; }
.tabs { display: flex; align-items: flex-start; height: 16px; }
.nav { width: 14px; height: 12px; border-right: 1px solid #ccc; background: #fafafa; }
.nav + .nav { width: 15px; }
.tab { position: relative; height: 12px; margin-left: 2px; padding: 0 4px; background: #fff; line-height: 12px; }
.tab::before, .tab::after { content: ""; position: absolute; top: 0; width: 2px; height: 12px; background: #222; }
.tab::before { left: 0; transform: skewX(20deg); }
.tab::after { right: 0; transform: skewX(-20deg); }
.tab.current { background: #000; color: #fff; }

.cmd { display: flex; align-items: flex-end; height: 28px; padding: 0 0 1px 2px; border-top: 2px solid #999; }
.cmd output { display: flex; align-items: center; flex: 1; gap: 6px; height: 19px; padding-left: 2px; border: 1px solid #888; border-right: 0; background: #fff; font: 10px "Liberation Mono", monospace; white-space: nowrap; }
.cmd .zh { font: 12px "Noto Sans CJK SC", sans-serif; line-height: 16px; }

.palette { position: absolute; top: 10px; right: 44px; bottom: 15px; display: flex; width: 148px; border: 3px solid #ababab; border-width: 3px 5px 3px 4px; background: #ececec; }
.side { display: flex; flex-direction: column; width: 13px; }
.side button { position: relative; height: 43px; border: 0 solid #9d9d9d; border-width: 1px 0 0 1px; writing-mode: vertical-rl; text-orientation: sideways; transform: rotate(180deg); white-space: nowrap; background: #e7e7e7; }
.side button:first-child { height: 39px; }
.side button:nth-child(even) { height: 42px; }
.side .current { border-left-color: transparent; background: #f1f1f1; font-weight: 700; }
.side button:not(:first-child)::after { content: ""; position: absolute; right: -5px; bottom: -1px; width: 3px; height: 3px; border-radius: 2px; background: #000; }
.tools { display: flex; flex: 1; flex-direction: column; overflow: hidden; }
.tools h2 { margin: 16px 0 9px 9px; font-size: 9px; font-weight: 400; line-height: 13px; }
.tools button { width: 100%; height: 32px; justify-content: flex-start; gap: 2px; padding-left: 16px; white-space: nowrap; }
.tools button + h2 { margin-top: 10px; }
.tools button svg { flex: none; width: 24px; height: 24px; }
.rings { flex: none; width: 32px; height: 24px; margin: 15px 0 0 14px; fill: #fff; stroke: #d5d5d5; stroke-width: 2px; }
.title { display: flex; flex-direction: column; align-items: center; width: 14px; padding: 1px 0; background: #b8c8dc; gap: 3px; }
.title span { flex: 1; writing-mode: vertical-rl; text-orientation: sideways; transform: rotate(180deg); font-size: 12px; line-height: 14px; white-space: nowrap; padding-top: 8px; }

.brand { position: absolute; right: 55px; bottom: 13px; display: flex; align-items: center; gap: 11px; width: 180px; height: 85px; padding-left: 15px; background: #222f57; color: #c9ccd6; }
.brand div { display: flex; flex-direction: column; }
.brand strong { font: 500 26px "Noto Sans CJK SC", sans-serif; line-height: 29px; }
.brand span { font: 12px "DejaVu Sans", sans-serif; line-height: 14px; }
```
